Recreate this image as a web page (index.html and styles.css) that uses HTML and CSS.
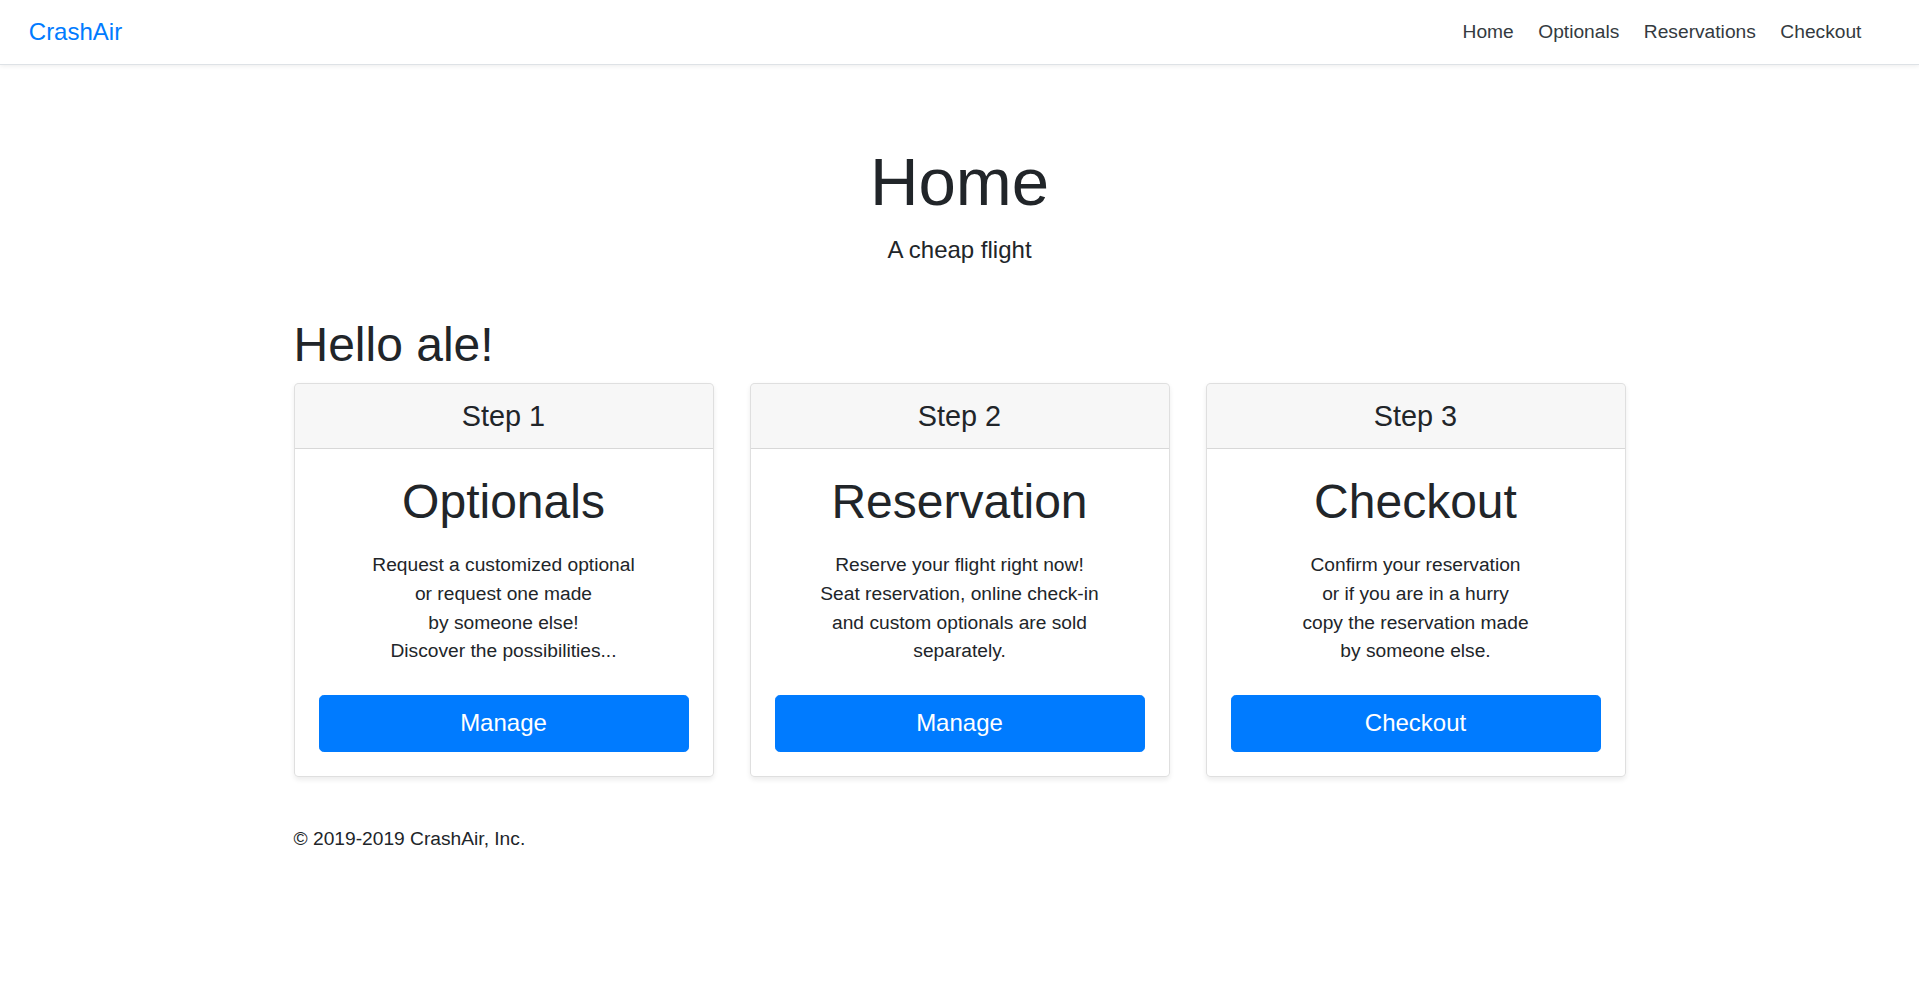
FILE: index.html
```html
<!DOCTYPE html>
<html lang="en">
<head>
<meta charset="utf-8">
<title>CrashAir</title>
<link rel="stylesheet" href="styles.css">
</head>
<body>
<header class="navbar">
  <a class="brand" href="#">CrashAir</a>
  <nav class="nav">
    <a class="nav-link" href="#">Home</a>
    <a class="nav-link" href="#">Optionals</a>
    <a class="nav-link" href="#">Reservations</a>
    <a class="nav-link" href="#">Checkout</a>
  </nav>
</header>

<div class="page-header">
  <h1 class="display">Home</h1>
  <p class="lead">A cheap flight</p>
</div>

<main class="container">
  <h1 class="greeting">Hello ale!</h1>
  <div class="card-deck">
    <div class="card">
      <div class="card-header"><h4 class="card-step">Step 1</h4></div>
      <div class="card-body">
        <h1 class="card-title">Optionals</h1>
        <ul class="card-list">
          <li>Request a customized optional</li>
          <li>or request one made</li>
          <li>by someone else!</li>
          <li>Discover the possibilities...</li>
        </ul>
        <a class="btn" href="#">Manage</a>
      </div>
    </div>
    <div class="card">
      <div class="card-header"><h4 class="card-step">Step 2</h4></div>
      <div class="card-body">
        <h1 class="card-title">Reservation</h1>
        <ul class="card-list">
          <li>Reserve your flight right now!</li>
          <li>Seat reservation, online check-in</li>
          <li>and custom optionals are sold</li>
          <li>separately.</li>
        </ul>
        <a class="btn" href="#">Manage</a>
      </div>
    </div>
    <div class="card">
      <div class="card-header"><h4 class="card-step">Step 3</h4></div>
      <div class="card-body">
        <h1 class="card-title">Checkout</h1>
        <ul class="card-list">
          <li>Confirm your reservation</li>
          <li>or if you are in a hurry</li>
          <li>copy the reservation made</li>
          <li>by someone else.</li>
        </ul>
        <a class="btn" href="#">Checkout</a>
      </div>
    </div>
  </div>
  <footer class="footer">© 2019-2019 CrashAir, Inc.</footer>
</main>
</body>
</html>
```

FILE: styles.css
```css
* { box-sizing: border-box; }

html, body {
  margin: 0;
  padding: 0;
}

body {
  font-family: "Liberation Sans", Arial, sans-serif;
  font-size: 19.2px;
  line-height: 1.5;
  color: #212529;
  background: #fff;
}

a { text-decoration: none; }

.navbar {
  display: flex;
  align-items: center;
  height: 65px;
  padding: 0 28.8px;
  margin-bottom: 19.2px;
  background: #fff;
  border-bottom: 1px solid #dee2e6;
  box-shadow: 0 2.4px 4.8px rgba(0, 0, 0, 0.075);
}

.brand {
  font-size: 24px;
  line-height: 1.2;
  color: #007bff;
  margin-right: auto;
}

.nav {
  margin-right: 19.2px;
}

.nav-link {
  padding: 9.6px;
  color: #343a40;
}

.page-header {
  max-width: 840px;
  margin: 0 auto;
  padding: 57.6px 19.2px 28.8px;
  text-align: center;
}

.display {
  margin: 0 0 9.6px;
  font-size: 67.2px;
  font-weight: 300;
  line-height: 1.2;
}

.lead {
  margin: 0 0 19.2px;
  font-size: 24px;
  font-weight: 300;
  line-height: 1.5;
}

.container {
  max-width: 1368px;
  margin: 0 auto;
  padding: 0 18px;
}

.greeting {
  margin: 0 0 9.6px;
  font-size: 48px;
  font-weight: 500;
  line-height: 1.2;
}

.card-deck {
  display: flex;
  margin: 0 -18px 19.2px;
  text-align: center;
}

.card {
  flex: 1 0 0;
  display: flex;
  flex-direction: column;
  margin: 0 18px 28.8px;
  background: #fff;
  border: 1px solid rgba(0, 0, 0, 0.125);
  border-radius: 4.8px;
  box-shadow: 0 2.4px 4.8px rgba(0, 0, 0, 0.075);
}

.card-header {
  padding: 14.4px 24px;
  background: rgba(0, 0, 0, 0.03);
  border-bottom: 1px solid rgba(0, 0, 0, 0.125);
  border-radius: 3.8px 3.8px 0 0;
}

.card-step {
  margin: 0;
  font-size: 28.8px;
  font-weight: 400;
  line-height: 1.2;
}

.card-body {
  flex: 1 1 auto;
  padding: 24px;
}

.card-title {
  margin: 0 0 14.4px;
  font-size: 48px;
  font-weight: 500;
  line-height: 1.2;
}

.card-list {
  list-style: none;
  padding: 0;
  margin: 20.8px 0 28.8px;
}

.btn {
  display: block;
  width: 100%;
  padding: 9.6px 19.2px;
  font-size: 24px;
  line-height: 1.5;
  color: #fff;
  background: #007bff;
  border: 1px solid #007bff;
  border-radius: 4.8px;
  text-align: center;
}

.footer {
  font-size: 19.2px;
  line-height: 1.5;
}
```
